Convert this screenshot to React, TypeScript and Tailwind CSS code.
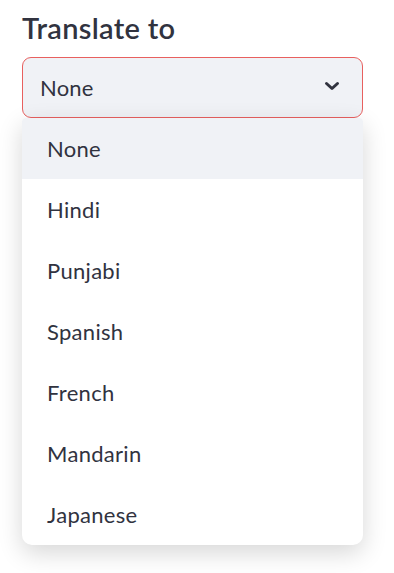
import React from "react";

const items = ["None", "Hindi", "Punjabi", "Spanish", "French", "Mandarin", "Japanese"];

export default function App() {
  return (
    <div
      className="min-h-[573px] w-[394px] bg-white pl-[22px] pt-[9px] text-[#31333f]"
      style={{ fontFamily: "Lato, 'Noto Sans', sans-serif" }}
    >
      <div className="text-[29px] font-semibold leading-[38px] tracking-[0.3px]">Translate to</div>
      <div className="relative mt-[10px] w-[341px]">
        <div className="flex h-[61px] items-center justify-between rounded-[9px] border-[1.5px] border-[#e8605f] bg-[#f0f2f6] pl-[17px] pr-[22px]">
          <span className="text-[22px] leading-none tracking-[0.2px]">None</span>
          <svg width="16" height="10" viewBox="0 0 16 10" fill="none" className="-mt-[3px]">
            <path d="M2.5 2.5 L8 7.5 L13.5 2.5" stroke="#31333f" strokeWidth="3" strokeLinecap="round" strokeLinejoin="round" />
          </svg>
        </div>
        <div className="absolute left-0 top-[61px] w-[341px] overflow-hidden rounded-b-[10px] rounded-t-[4px] bg-white shadow-[0_8px_24px_rgba(0,0,0,0.16)]">
          {items.map((it, i) => (
            <div
              key={it}
              className={
                i === 0
                  ? "flex h-[61px] items-center bg-[#f0f2f6] pl-[25px] text-[22px] tracking-[0.3px]"
                  : "flex h-[61px] items-center pl-[25px] text-[22px] tracking-[0.3px]"
              }
            >
              {it}
            </div>
          ))}
        </div>
      </div>
    </div>
  );
}
